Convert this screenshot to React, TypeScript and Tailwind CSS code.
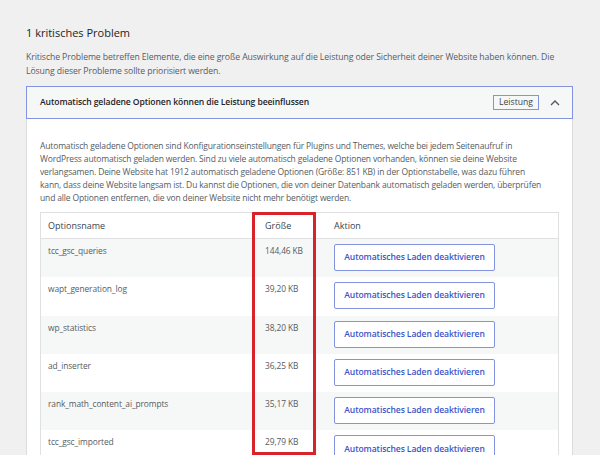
import React from "react";

const rows = [
  { name: "tcc_gsc_queries", size: "144,46 KB" },
  { name: "wapt_generation_log", size: "39,20 KB" },
  { name: "wp_statistics", size: "38,20 KB" },
  { name: "ad_inserter", size: "36,25 KB" },
  { name: "rank_math_content_ai_prompts", size: "35,17 KB" },
  { name: "tcc_gsc_imported", size: "29,79 KB" },
];

const App: React.FC = () => {
  return (
    <div className="w-[600px] h-[455px] overflow-hidden bg-[#f0f0f1] pl-[26px] pr-[27px] pt-[24px] font-['Open_Sans',sans-serif] text-[#555c63]">
      <h2 className="text-[11px] leading-[18px] text-[#1d2327]">1 kritisches Problem</h2>

      {/* Beschreibung */}
      <p className="mt-[8px] text-[8.7px] leading-[14px] tracking-[-0.1px] whitespace-nowrap">
        Kritische Probleme betreffen Elemente, die eine große Auswirkung auf die Leistung oder Sicherheit deiner Website haben können. Die
        <br />
        Lösung dieser Probleme sollte priorisiert werden.
      </p>

      <div className="mt-[8px] w-[547px]">
        {/* Kopfzeile */}
        <div className="flex h-[33px] items-center border border-[#8393df] bg-[#f6f7f7] pl-[13px] pr-[12px]">
          <span className="flex-1 text-[8.6px] font-semibold text-[#1d2327] tracking-[-0.1px]">
            Automatisch geladene Optionen können die Leistung beeinflussen
          </span>
          <span className="flex h-[15px] w-[46px] items-center justify-center border border-[#8393df] text-[8.6px] text-[#3c434a]">
            Leistung
          </span>
          <svg className="ml-[11px]" width="10" height="7" viewBox="0 0 10 7" fill="none">
            <path d="M1 6 L5 2 L9 6" stroke="#50575e" strokeWidth="1.3" />
          </svg>
        </div>

        {/* Inhalt */}
        <div className="border-x border-[#dcdcde] bg-white px-[13px] pt-[20px]">
          <p className="text-[8.5px] leading-[13px] tracking-[-0.15px] whitespace-nowrap">
            Automatisch geladene Optionen sind Konfigurationseinstellungen für Plugins und Themes, welche bei jedem Seitenaufruf in
            <br />
            WordPress automatisch geladen werden. Sind zu viele automatisch geladene Optionen vorhanden, können sie deine Website
            <br />
            verlangsamen. Deine Website hat 1912 automatisch geladene Optionen (Größe: 851 KB) in der Optionstabelle, was dazu führen
            <br />
            kann, dass deine Website langsam ist. Du kannst die Optionen, die von deiner Datenbank automatisch geladen werden, überprüfen
            <br />
            und alle Optionen entfernen, die von deiner Website nicht mehr benötigt werden.
          </p>

          <div className="relative mt-[8px] border border-[#e0e0e2]">
            <div className="flex h-[26px] items-center border-b border-[#e0e0e2] text-[9px] text-[#3c434a]">
              <span className="w-[212px] pl-[7px]">Optionsname</span>
              <span className="w-[74px] pl-[12px]">Größe</span>
              <span className="pl-[7px]">Aktion</span>
            </div>
            {rows.map((r, i) => (
              <div
                key={r.name}
                className={`flex h-[38.3px] items-start text-[8.4px] tracking-[-0.1px] ${i % 2 === 0 ? "bg-[#f6f7f7]" : "bg-white"}`}
              >
                <span className="w-[212px] pl-[7px] pt-[5px] leading-[13px]">{r.name}</span>
                <span className="w-[74px] pl-[12px] pt-[5px] leading-[13px]">{r.size}</span>
                <span className="pl-[7px] pt-[5px]">
                  <span className="flex h-[27px] w-[161px] items-center justify-center rounded-[2px] border border-[#8393df] bg-white text-[8.6px] font-semibold text-[#3c55c9] tracking-[-0.1px]">
                    Automatisches Laden deaktivieren
                  </span>
                </span>
              </div>
            ))}
            {/* Markierung */}
            <div className="absolute left-[211px] top-[-1px] h-[243px] w-[64px] border-[3px] border-[#d9232a]" />
          </div>
        </div>
      </div>
    </div>
  );
};

export default App;
